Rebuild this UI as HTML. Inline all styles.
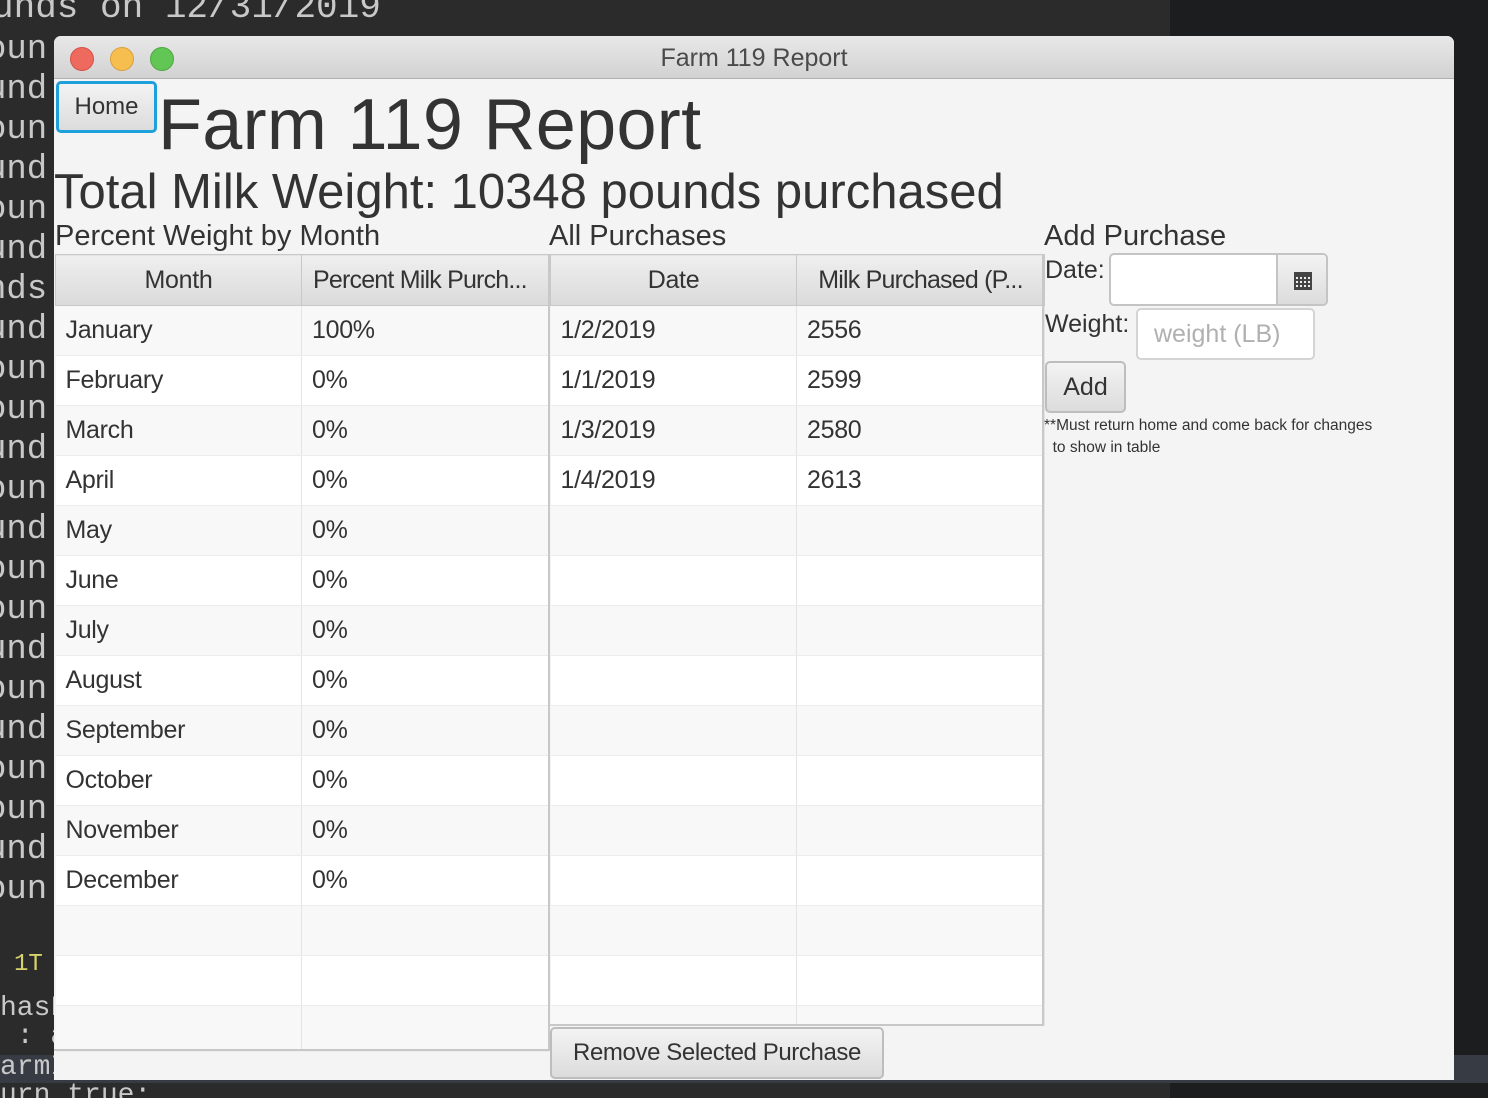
<!DOCTYPE html>
<html><head><meta charset="utf-8"><style>
*{margin:0;padding:0;box-sizing:border-box}
html,body{width:1488px;height:1098px;overflow:hidden}
body{background:#2b2b2b;position:relative;font-family:"Liberation Sans",sans-serif;color:#333}
.a{position:absolute;white-space:nowrap}
.mono{font-family:"Liberation Mono","DejaVu Sans Mono",monospace;color:#c8c8c8;font-size:34px;line-height:40px}
#rt{position:absolute;left:1170px;top:0;width:318px;height:1098px;background:#1b1d1f}
#win{position:absolute;left:54px;top:36px;width:1400px;height:1044px;background:#f4f4f4;border-radius:7px 7px 0 0;overflow:hidden}
#tb{position:absolute;left:0;top:0;width:1400px;height:43px;background:linear-gradient(#e8e8e8,#d2d2d2);border-bottom:1px solid #b0b0b0;text-align:center;font-size:25px;line-height:44px;color:#4a4a4a}
.dot{position:absolute;top:11px;width:24px;height:24px;border-radius:50%}
table{border-collapse:collapse;position:absolute;table-layout:fixed}
td,th{height:50px;font-size:25px;font-weight:normal;padding-left:10px;border-right:1px solid #e4e4e4;text-align:left;overflow:hidden;white-space:nowrap;letter-spacing:-0.3px}
th{background:linear-gradient(#efefef,#dadada);border:1px solid #c8c8c8;text-align:center;padding:0;height:51px;text-overflow:clip}
tr:nth-child(even) td{background:#f8f8f8}
tr:nth-child(odd) td{background:#fff}
td{border-bottom:1px solid #ececec}
.btn{position:absolute;border:2px solid #bdbdbd;border-radius:5px;background:linear-gradient(#f3f3f3,#dcdcdc);text-align:center;color:#333}
</style></head><body>
<div id="rt"></div>
<div class="a mono" style="left:-8px;top:-12px;font-size:36px">unds on 12/31/2019</div>
<div class="a mono" style="left:-14px;top:30px;line-height:40px;white-space:pre">oun
und
oun
und
oun
und
nds
und
oun
oun
und
oun
und
oun
oun
und
oun
und
oun
oun
und
oun</div>
<div class="a mono" style="left:14px;top:945px;color:#d7d26a;font-size:24px">1T</div>
<div class="a mono" style="left:0;top:995px;font-size:28px;line-height:28px;white-space:pre">hasF
 : a</div>
<div class="a" style="left:0;top:1055px;width:1488px;height:28px;background:#363b44"></div>
<div class="a mono" style="left:0;top:1052px;font-size:28px;line-height:32px">armI</div>
<div class="a mono" style="left:0;top:1080px;font-size:28px;line-height:32px">urn true;</div>
<div id="win">
<div id="tb">Farm 119 Report
<div class="dot" style="left:16px;background:#ee6a5e;border:1px solid #d55045"></div>
<div class="dot" style="left:56px;background:#f5be4f;border:1px solid #d8a13a"></div>
<div class="dot" style="left:96px;background:#62c655;border:1px solid #4ca73f"></div>
</div>
<div class="btn" style="left:2px;top:45px;width:101px;height:52px;border:3px solid #1ea0db;font-size:24px;line-height:46px">Home</div>
<div class="a" style="left:104px;top:44px;font-size:72px;line-height:90px;letter-spacing:0.3px">Farm 119 Report</div>
<div class="a" style="left:0;top:126px;font-size:49px;line-height:60px">Total Milk Weight: 10348 pounds purchased</div>
<div class="a" style="left:1px;top:182px;font-size:29px;line-height:36px;letter-spacing:0px">Percent Weight by Month</div>
<div class="a" style="left:495px;top:182px;font-size:29px;line-height:36px">All Purchases</div>
<div class="a" style="left:990px;top:182px;font-size:29px;line-height:36px">Add Purchase</div>
<table style="left:1px;top:218px;width:493px">
<colgroup><col style="width:246px"><col style="width:247px"></colgroup>
<tr><th>Month</th><th style="text-align:left;padding-left:11px;letter-spacing:-0.8px">Percent Milk Purch...</th></tr>
<tr><td>January</td><td>100%</td></tr><tr><td>February</td><td>0%</td></tr><tr><td>March</td><td>0%</td></tr><tr><td>April</td><td>0%</td></tr><tr><td>May</td><td>0%</td></tr><tr><td>June</td><td>0%</td></tr><tr><td>July</td><td>0%</td></tr><tr><td>August</td><td>0%</td></tr><tr><td>September</td><td>0%</td></tr><tr><td>October</td><td>0%</td></tr><tr><td>November</td><td>0%</td></tr><tr><td>December</td><td>0%</td></tr><tr><td></td><td></td></tr><tr><td></td><td></td></tr><tr><td style="height:46px"></td><td style="height:46px"></td></tr>
</table>
<div class="a" style="left:0;top:1013px;width:494px;height:2px;background:#c8c8c8"></div>
<div class="a" style="left:494px;top:218px;width:2px;height:797px;background:#c8c8c8"></div>
<table style="left:496px;top:218px;width:494px">
<colgroup><col style="width:246px"><col style="width:248px"></colgroup>
<tr><th>Date</th><th style="letter-spacing:-0.8px">Milk Purchased (P...</th></tr>
<tr><td>1/2/2019</td><td>2556</td></tr><tr><td>1/1/2019</td><td>2599</td></tr><tr><td>1/3/2019</td><td>2580</td></tr><tr><td>1/4/2019</td><td>2613</td></tr><tr><td></td><td></td></tr><tr><td></td><td></td></tr><tr><td></td><td></td></tr><tr><td></td><td></td></tr><tr><td></td><td></td></tr><tr><td></td><td></td></tr><tr><td></td><td></td></tr><tr><td></td><td></td></tr><tr><td></td><td></td></tr><tr><td></td><td></td></tr><tr><td style="height:20px"></td><td style="height:20px"></td></tr>
</table>
<div class="a" style="left:988px;top:218px;width:2px;height:772px;background:#c8c8c8"></div>
<div class="a" style="left:495px;top:988px;width:495px;height:2px;background:#c8c8c8"></div>
<div class="btn" style="left:496px;top:991px;width:334px;height:52px;font-size:24px;line-height:48px;letter-spacing:-0.4px">Remove Selected Purchase</div>
<div class="a" style="left:991px;top:218px;font-size:25px;line-height:32px">Date:</div>
<div class="a" style="left:1055px;top:217px;width:219px;height:53px;border:2px solid #c4c4c4;border-radius:5px;background:#fff;overflow:hidden">
<div style="position:absolute;right:0;top:0;width:50px;height:49px;border-left:2px solid #c4c4c4;background:linear-gradient(#f3f3f3,#dcdcdc)">
<svg style="position:absolute;left:16px;top:17px" width="18" height="18" viewBox="0 0 18 18"><rect width="18" height="18" fill="#444"/><g fill="#eee"><rect x="2" y="5" width="2" height="2"/><rect x="6" y="5" width="2" height="2"/><rect x="10" y="5" width="2" height="2"/><rect x="14" y="5" width="2" height="2"/><rect x="2" y="9" width="2" height="2"/><rect x="6" y="9" width="2" height="2"/><rect x="10" y="9" width="2" height="2"/><rect x="14" y="9" width="2" height="2"/><rect x="2" y="13" width="2" height="2"/><rect x="6" y="13" width="2" height="2"/><rect x="10" y="13" width="2" height="2"/><rect x="14" y="13" width="2" height="2"/></g></svg></div></div>
<div class="a" style="left:991px;top:272px;font-size:25px;line-height:32px">Weight:</div>
<div class="a" style="left:1082px;top:272px;width:179px;height:52px;border:2px solid #d4d4d4;border-radius:5px;background:#fff;font-size:25px;line-height:48px;padding-left:16px;color:#b0b0b0">weight (LB)</div>
<div class="btn" style="left:991px;top:325px;width:81px;height:52px;font-size:25px;line-height:48px">Add</div>
<div class="a" style="left:990px;top:379px;font-size:15.5px;line-height:22px;white-space:pre">**Must return home and come back for changes
  to show in table</div>
</div>
</body></html>
